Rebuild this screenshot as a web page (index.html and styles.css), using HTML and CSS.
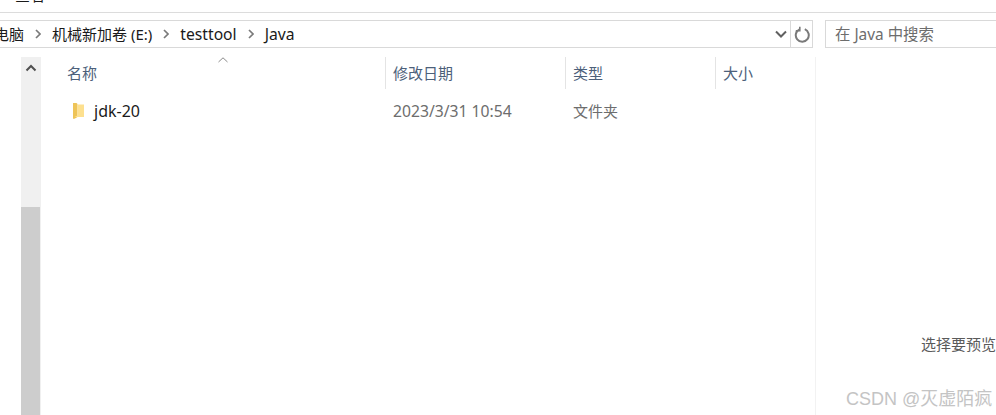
FILE: index.html
```html
<!DOCTYPE html>
<html lang="zh-CN">
<head>
    <meta charset="UTF-8">
    <meta name="viewport" content="width=device-width, initial-scale=1.0">
    <title>Java</title>
    <link rel="stylesheet" href="styles.css">
</head>
<body>
    <div class="ribbon">
        <span class="ribbon-tab">查看</span>
    </div>

    <div class="nav-row">
        <div class="address-bar">
            <div class="crumbs">
                <span class="crumb">此电脑</span>
                <svg class="crumb-sep" width="6" height="10" viewBox="0 0 6 10"><path d="M1 1l4 4-4 4" fill="none" stroke="#7a7a7a" stroke-width="1.7"/></svg>
                <span class="crumb">机械新加卷 (E:)</span>
                <svg class="crumb-sep" width="6" height="10" viewBox="0 0 6 10"><path d="M1 1l4 4-4 4" fill="none" stroke="#7a7a7a" stroke-width="1.7"/></svg>
                <span class="crumb crumb-latin">testtool</span>
                <svg class="crumb-sep" width="6" height="10" viewBox="0 0 6 10"><path d="M1 1l4 4-4 4" fill="none" stroke="#7a7a7a" stroke-width="1.7"/></svg>
                <span class="crumb crumb-latin">Java</span>
            </div>
            <svg class="dropdown" width="12" height="8" viewBox="0 0 12 8"><path d="M1 1.500l5 5 5-5" fill="none" stroke="#606060" stroke-width="2"/></svg>
            <div class="refresh">
                <svg width="16" height="17" viewBox="0 0 16 17"><path d="M5.500 3.300A6.500 6.500 0 1 0 10.800 3.200" fill="none" stroke="#7a7a7a" stroke-width="2"/><path d="M5.800 0.800v4H1.800" fill="none" stroke="#7a7a7a" stroke-width="1.600"/></svg>
            </div>
        </div>
        <div class="search-box">在 Java 中搜索</div>
    </div>

    <div class="main">
        <div class="scrollbar">
            <div class="scroll-track">
                <svg width="12" height="8" viewBox="0 0 12 8"><path d="M1.500 6.500L6 2l4.500 4.500" fill="none" stroke="#505050" stroke-width="2"/></svg>
            </div>
            <div class="scroll-thumb"></div>
        </div>

        <div class="file-list">
            <svg class="sort-arrow" width="10" height="6" viewBox="0 0 10 6"><path d="M0.500 5L5 0.800 9.500 5" fill="none" stroke="#8a8a8a" stroke-width="1"/></svg>
            <div class="list-head">
                <div class="col col-name">名称</div>
                <div class="col col-date">修改日期</div>
                <div class="col col-type">类型</div>
                <div class="col col-size">大小</div>
            </div>
            <div class="list-row">
                <div class="cell-name">
                    <svg width="14" height="18" viewBox="0 0 14 18">
                        <path d="M2 1h3.500L6.500 2v13l-3 1.800H2z" fill="#eec458"/>
                        <path d="M6.500 2.500H13V15H3.500l3-1.500z" fill="#fde08f"/>
                    </svg>
                    <span class="file-name">jdk-20</span>
                </div>
                <div class="cell-date">2023/3/31 10:54</div>
                <div class="cell-type">文件夹</div>
            </div>
        </div>

        <div class="preview">
            <span class="preview-text">选择要预览</span>
        </div>
    </div>

    <div class="watermark">CSDN @灭虚陌疯</div>
</body>
</html>
```

FILE: styles.css
```css
html, body {
    height: 100%;
}
body {
    margin: 0;
    width: 996px;
    height: 415px;
    overflow: hidden;
    background: #fff;
    font-family: "Noto Sans", "Noto Sans CJK SC", sans-serif;
    font-size: 15px;
    color: #1a1a1a;
    position: relative;
    display: flex;
    flex-direction: column;
}
.ribbon {
    height: 12px;
    border-bottom: 1px solid #dcdcdc;
    overflow: hidden;
    padding-left: 15px;
}
.ribbon-tab {
    display: block;
    margin-top: -15px;
    line-height: 20px;
}
.nav-row {
    display: flex;
    margin-top: 7px;
    height: 28px;
}
.address-bar {
    width: 813px;
    box-sizing: border-box;
    border: 1px solid #d9d9d9;
    border-left: none;
    display: flex;
    align-items: center;
    overflow: hidden;
}
.crumbs {
    flex: 1;
    display: flex;
    align-items: center;
    gap: 11px;
    margin-left: -21px;
}
.crumb {
    white-space: nowrap;
    line-height: 26px;
}
.crumb-latin {
    font-size: 15.7px;
}
.dropdown {
    margin-right: 3px;
}
.refresh {
    width: 21px;
    height: 100%;
    border-left: 1px solid #d9d9d9;
    display: flex;
    align-items: center;
    justify-content: center;
}
.search-box {
    margin-left: 12px;
    flex: 1;
    border: 1px solid #d9d9d9;
    border-right: none;
    padding-left: 9px;
    line-height: 27px;
    font-size: 15.4px;
    color: #6d6d6d;
    white-space: nowrap;
}
.main {
    flex: 1;
    display: flex;
    margin-top: 9px;
    min-height: 0;
}
.scrollbar {
    width: 20px;
    margin-left: 21px;
    display: flex;
    flex-direction: column;
    background: #f0f0f0;
}
.scroll-track {
    height: 150px;
    display: flex;
    justify-content: center;
    padding-top: 7px;
    box-sizing: border-box;
}
.scroll-track svg {
    display: block;
}
.scroll-thumb {
    flex: 1;
    background: #cdcdcd;
    margin-right: 1px;
}
.file-list {
    width: 774px;
    position: relative;
    border-right: 1px solid #f2f2f2;
}
.sort-arrow {
    position: absolute;
    left: 177px;
    top: 0;
}
.list-head {
    display: flex;
    height: 32px;
    padding-left: 26px;
    color: #4c607a;
    line-height: 32px;
}
.col {
    box-sizing: border-box;
    padding-left: 7px;
    border-left: 1px solid #e4e4e4;
    white-space: nowrap;
}
.col-name {
    width: 318px;
    border-left: none;
    padding-left: 0;
}
.col-date {
    width: 180px;
}
.col-type {
    width: 150px;
}
.col-size {
    width: 100px;
}
.list-row {
    display: flex;
    height: 30px;
    margin-top: 7px;
    padding-left: 30px;
    align-items: center;
}
.cell-name {
    width: 322px;
    display: flex;
    align-items: center;
    gap: 9px;
}
.file-name {
    font-size: 16px;
}
.cell-date {
    width: 180px;
    color: #6d6d6d;
    font-size: 15.7px;
}
.cell-type {
    color: #6d6d6d;
    padding-bottom: 2px;
}
.preview {
    flex: 1;
    position: relative;
}
.preview-text {
    position: absolute;
    left: 105px;
    top: 276px;
    color: #5a5a5a;
    white-space: nowrap;
}
.watermark {
    position: absolute;
    left: 846px;
    top: 384px;
    font-family: "Liberation Sans", "Noto Sans CJK SC", sans-serif;
    font-size: 18px;
    color: #c4c4c4;
    white-space: nowrap;
}
```
